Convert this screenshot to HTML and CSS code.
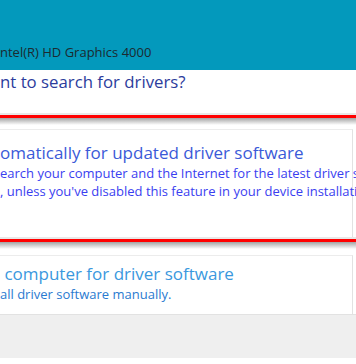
FILE: index.html
```html
<!DOCTYPE html>
<html lang="en">
<head>
  <meta charset="UTF-8">
  <meta name="viewport" content="width=device-width, initial-scale=1.0">
  <title>Update Drivers</title>
  <link rel="stylesheet" href="styles.css">
</head>
<body>
  <div class="window">
    <header class="banner">
      <span class="device">ntel(R) HD Graphics 4000</span>
    </header>

    <main class="content">
      <h1 class="prompt">nt to search for drivers?</h1>

      <div class="rule"></div>
      <a class="option option-auto" href="#">
        <span class="option-title">omatically for updated driver software</span>
        <span class="option-desc">earch your computer and the Internet for the latest driver software for your device</span>
        <span class="option-desc">, unless you've disabled this feature in your device installation settings.</span>
      </a>
      <div class="rule"></div>

      <a class="option option-browse" href="#">
        <span class="option-title">&nbsp;computer for driver software</span>
        <span class="option-desc">all driver software manually.</span>
      </a>
    </main>

    <footer class="footer"></footer>
  </div>
</body>
</html>
```

FILE: styles.css
```css
html, body {
  margin: 0;
  padding: 0;
}

body {
  font-family: 'Open Sans', 'Noto Sans', sans-serif;
  background-color: #f7f7f7;
  overflow: hidden;
}

.window {
  width: 356px;
  height: 364px;
  overflow: hidden;
  background-color: #fff;
}

.banner {
  height: 70px;
  box-sizing: border-box;
  padding-top: 44px;
  background-color: #0399bc;
}

.device {
  display: block;
  font-size: 13px;
  line-height: 16px;
  color: #1c2a30;
  white-space: nowrap;
}

.prompt {
  margin: 0;
  padding: 2px 0 21px;
  font-size: 16.8px;
  font-weight: normal;
  line-height: 20px;
  color: #2c3c9c;
  white-space: nowrap;
}

.rule {
  height: 12px;
  background: linear-gradient(to bottom, #e8e8e8 0, #e8e8e8 2px, #f00 2px, #f00 5px, #a3a3a3 5px, #fff 12px);
}

.option {
  display: flex;
  flex-direction: column;
  margin-right: 3px;
  border-top: 1px solid #ececec;
  border-right: 1px solid #e2e2e2;
  text-decoration: none;
  white-space: nowrap;
}

.option-auto {
  margin-top: 4px;
  padding: 12px 0 37px;
}

.option-browse {
  margin-top: 6px;
  padding: 7px 0 11px;
}

.option-title {
  font-size: 17px;
  line-height: 22px;
}

.option-desc {
  font-size: 13px;
  line-height: 18px;
}

.option-auto .option-title {
  color: #3a5ad8;
}

.option-auto .option-desc {
  color: #3a3ef0;
}

.option-browse .option-title {
  color: #3a98de;
}

.option-browse .option-desc {
  color: #2a7ad0;
}

.footer {
  height: 43px;
  border-top: 1px solid #e2e2e2;
  background-color: #efefef;
}
```
